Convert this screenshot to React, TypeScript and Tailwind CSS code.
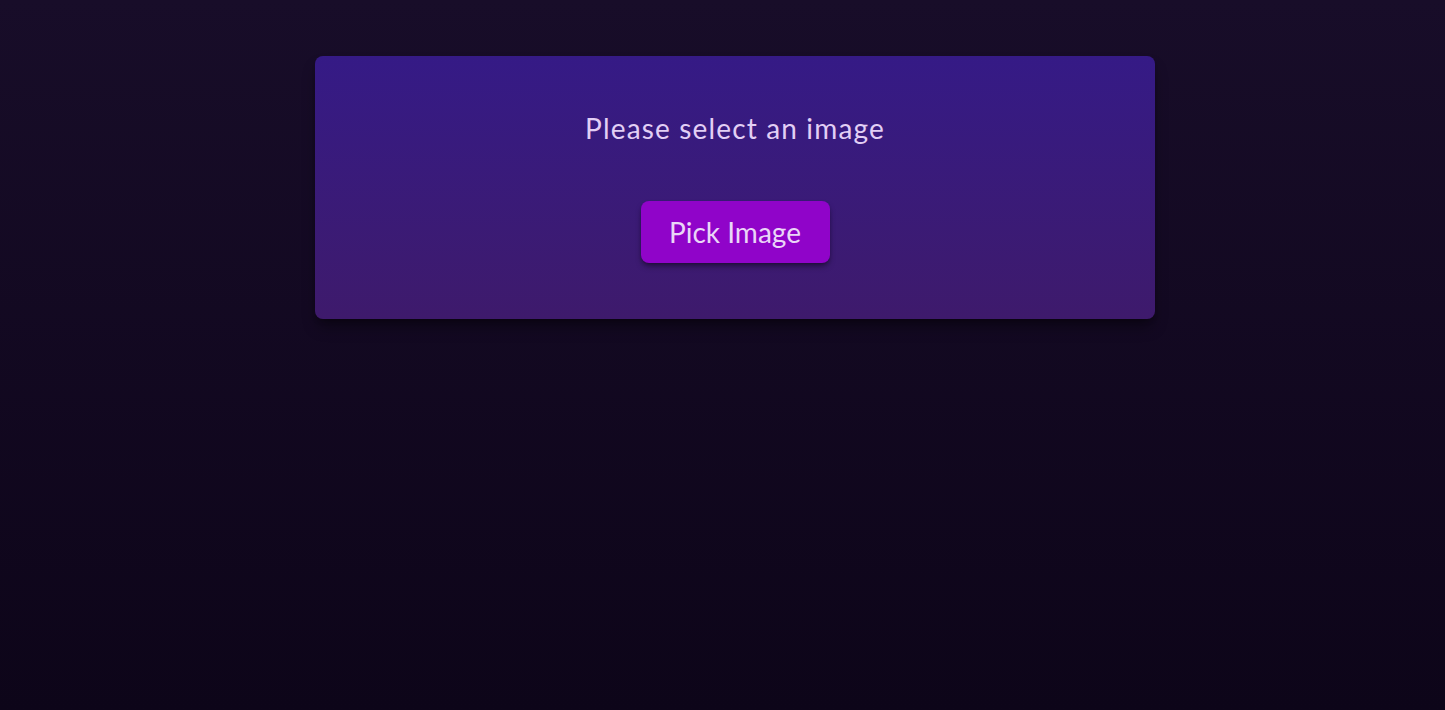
export default function App() {
  return (
    <div className="min-h-[710px] w-full bg-gradient-to-b from-[#180d29] to-[#0d0519] pl-[25px] pt-14">
      <div className="mx-auto flex w-[840px] flex-col items-center rounded-lg bg-gradient-to-b from-[#351a86] to-[#3e1a6c] pb-[56px] pt-[52px] shadow-lg shadow-black/40">
        <h2 className="font-['Lato',sans-serif] text-[28px] leading-[40px] tracking-[1.15px] text-[#e2cff5]">
          Please select an image
        </h2>
        <button
          type="button"
          className="mt-[53px] h-[62px] w-[189px] rounded-lg bg-[#9004c9] font-['Lato',sans-serif] text-[28px] text-[#ead6f7] shadow-md shadow-black/40"
        >
          Pick Image
        </button>
      </div>
    </div>
  );
}
